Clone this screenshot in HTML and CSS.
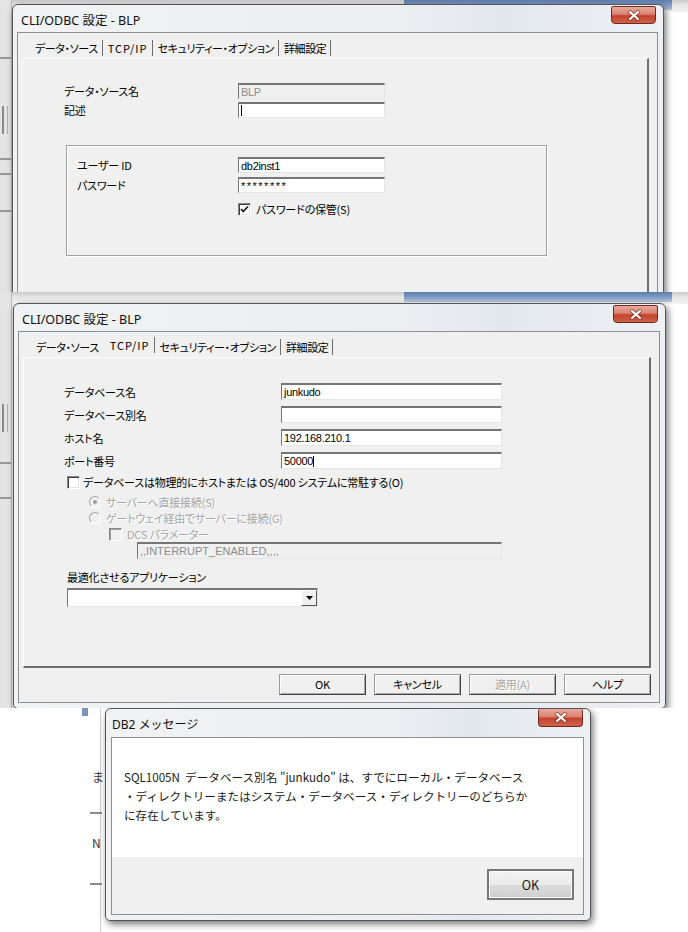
FILE: index.html
```html
<!DOCTYPE html>
<html lang="ja">

<head>
  <meta charset="UTF-8">
  <title>CLI/ODBC 設定 - BLP</title>
  <link rel="stylesheet" href="styles.css">
</head>

<body>
<!-- 1枚目: データ・ソース タブ -->
<div class="shot shot-1">
  <div class="desk desk-top"></div>
  <div class="desk desk-blue"></div>
  <div class="desk desk-left">
    <i class="rule" style="top:57px"></i>
    <i class="mark" style="top:106px"></i>
    <i class="rule" style="top:158px"></i>
    <i class="rule" style="top:173px"></i>
    <i class="rule" style="top:210px"></i>
  </div>

  <div class="win win-1">
    <div class="titlebar">
      <span class="title">CLI/ODBC 設定 - BLP</span>
      <span class="close"><svg width="14" height="11" viewBox="0 0 14 11"><path d="M3 2L11 9M11 2L3 9" stroke="#5a1c14" stroke-width="4" stroke-linecap="round" opacity=".5"/><path d="M3 2L11 9M11 2L3 9" stroke="#fff" stroke-width="2.2" stroke-linecap="round"/></svg></span>
    </div>
    <div class="client">
      <div class="tabs">
        <span class="tab">データ・ソース</span>
        <span class="tab tab-latin">TCP/IP</span>
        <span class="tab">セキュリティー・オプション</span>
        <span class="tab">詳細設定</span>
      </div>
      <div class="panel panel-ds">
        <div class="grid grid-ds">
          <span class="label">データ・ソース名</span>
          <span class="field disabled">BLP</span>
          <span class="label">記述</span>
          <span class="field"><i class="caret"></i></span>
        </div>
        <div class="group">
          <div class="grid grid-user">
            <span class="label">ユーザー ID</span>
            <span class="field">db2inst1</span>
            <span class="label">パスワード</span>
            <span class="field pw">********</span>
          </div>
          <div class="opt opt-save">
            <span class="chk"><svg width="9" height="9" viewBox="0 0 9 9"><path d="M1 4L3.3 6.5L8 1.5" fill="none" stroke="#1a1a1a" stroke-width="1.8"/></svg></span>
            <span>パスワードの保管(S)</span>
          </div>
        </div>
      </div>
    </div>
  </div>
</div>

<!-- 2枚目: TCP/IP タブ -->
<div class="shot shot-2">
  <div class="desk desk-top"></div>
  <div class="desk desk-blue"></div>
  <div class="desk desk-left">
    <i class="mark" style="top:112px"></i>
    <i class="rule" style="top:170px"></i>
    <i class="rule" style="top:205px"></i>
  </div>

  <div class="win win-2">
    <div class="titlebar">
      <span class="title">CLI/ODBC 設定 - BLP</span>
      <span class="close"><svg width="14" height="11" viewBox="0 0 14 11"><path d="M3 2L11 9M11 2L3 9" stroke="#5a1c14" stroke-width="4" stroke-linecap="round" opacity=".5"/><path d="M3 2L11 9M11 2L3 9" stroke="#fff" stroke-width="2.2" stroke-linecap="round"/></svg></span>
    </div>
    <div class="client">
      <div class="tabs">
        <span class="tab tab-prev">データ・ソース</span>
        <span class="tab tab-latin raised">TCP/IP</span>
        <span class="tab">セキュリティー・オプション</span>
        <span class="tab">詳細設定</span>
      </div>
      <div class="panel panel-tcp">
        <div class="grid grid-tcp">
          <span class="label">データベース名</span>
          <span class="field">junkudo</span>
          <span class="label">データベース別名</span>
          <span class="field"></span>
          <span class="label">ホスト名</span>
          <span class="field">192.168.210.1</span>
          <span class="label">ポート番号</span>
          <span class="field">50000<i class="caret"></i></span>
        </div>
        <div class="opt opt-host">
          <span class="chk"></span>
          <span>データベースは物理的にホストまたは OS/400 システムに常駐する(O)</span>
        </div>
        <div class="opt opt-radio off">
          <span class="radio on"></span>
          <span>サーバーへ直接接続(S)</span>
        </div>
        <div class="opt opt-radio off">
          <span class="radio"></span>
          <span>ゲートウェイ経由でサーバーに接続(G)</span>
        </div>
        <div class="opt opt-dcs off">
          <span class="chk dim"></span>
          <span>DCS パラメーター</span>
        </div>
        <span class="field disabled field-dcs">,,INTERRUPT_ENABLED,,,,</span>
        <div class="label label-app">最適化させるアプリケーション</div>
        <div class="combo">
          <span class="combo-btn"><svg width="7" height="4" viewBox="0 0 7 4"><path d="M0 0H7L3.5 4Z" fill="#000"/></svg></span>
        </div>
      </div>
      <div class="buttons">
        <span class="btn">OK</span>
        <span class="btn">キャンセル</span>
        <span class="btn off">適用(A)</span>
        <span class="btn">ヘルプ</span>
      </div>
    </div>
  </div>
</div>

<!-- 3枚目: DB2 メッセージ -->
<div class="shot shot-3">
  <div class="desk desk-bar"></div>
  <div class="desk desk-mark"></div>
  <div class="desk desk-side">
    <span class="frag" style="top:62px">ま</span>
    <i class="rule" style="top:104px"></i>
    <span class="frag" style="top:128px">N</span>
    <i class="rule" style="top:175px"></i>
  </div>

  <div class="win win-3">
    <div class="titlebar">
      <span class="title">DB2 メッセージ</span>
      <span class="close"><svg width="14" height="11" viewBox="0 0 14 11"><path d="M3 2L11 9M11 2L3 9" stroke="#5a1c14" stroke-width="4" stroke-linecap="round" opacity=".5"/><path d="M3 2L11 9M11 2L3 9" stroke="#fff" stroke-width="2.2" stroke-linecap="round"/></svg></span>
    </div>
    <div class="client client-msg">
      <p class="msg">SQL1005N&nbsp; データベース別名 "junkudo" は、すでにローカル・データベース<br>・ディレクトリーまたはシステム・データベース・ディレクトリーのどちらか<br>に存在しています。</p>
      <div class="msg-foot">
        <span class="btn-ok">OK</span>
      </div>
    </div>
  </div>
</div>
</body>

</html>
```

FILE: styles.css
```css
* {
  box-sizing: border-box;
}

body {
  margin: 0;
  width: 688px;
  height: 932px;
  overflow: hidden;
  background: #fff;
  font-family: "Noto Sans CJK JP", sans-serif;
  font-size: 12px;
  color: #000;
}

/* 切り抜いた画面1枚ずつ */
.shot {
  position: relative;
  overflow: hidden;
}

.shot-1 {
  height: 292px;
  background: linear-gradient(90deg, #eaeaea, #f7f7f7 40%, #fff);
}

.shot-2 {
  height: 416px;
  background: linear-gradient(90deg, #eaeaea, #f7f7f7 40%, #fff);
}

.shot-3 {
  height: 224px;
  background: #fff;
}

/* 背景のデスクトップの破片 */
.desk {
  position: absolute;
}

.desk-top {
  left: 0;
  top: 0;
  width: 100%;
  height: 12px;
  background: linear-gradient(#c9c9c9, #e6e6e6 5px, #f2f2f2);
}

.desk-blue {
  left: 404px;
  top: 0;
  width: 268px;
  height: 10px;
  background: linear-gradient(#5d7eaf, #7f9ac2 5px, #b9c8dc);
}

.desk-left {
  left: 0;
  top: 0;
  width: 12px;
  height: 100%;
  background: #e4e4e4;
  border-right: 1px solid #b8b8b8;
}

.rule {
  position: absolute;
  left: 0;
  width: 100%;
  height: 2px;
  background: #9a9a9a;
}

.mark {
  position: absolute;
  left: 2px;
  width: 6px;
  height: 28px;
  border-left: 2px solid #8a8a8a;
  border-right: 1px solid #b0b0b0;
}

.desk-bar {
  left: 155px;
  top: 0;
  width: 220px;
  height: 3px;
  background: #9a9a9a;
}

.desk-mark {
  left: 82px;
  top: 0;
  width: 6px;
  height: 8px;
  background: #7d93b8;
}

.desk-side {
  left: 0;
  top: 0;
  width: 101px;
  height: 100%;
  border-right: 1px solid #cfcfcf;
}

.desk-side .rule {
  left: 90px;
  width: 12px;
  background: #8a8a8a;
}

.frag {
  position: absolute;
  left: 92px;
  font-size: 12px;
  line-height: 14px;
  color: #333;
}

/* ウィンドウ */
.win {
  position: absolute;
  display: flex;
  flex-direction: column;
  border: 1px solid #555;
  border-radius: 6px 6px 5px 5px;
  padding: 0 5px 5px 4px;
  background: linear-gradient(90deg, #f1f2f4, #eceef1 60%, #e3e8ef 75%, #eef0f3);
  box-shadow: 2px 3px 7px rgba(0, 0, 0, .55);
}

.win-1 {
  left: 12px;
  top: 4px;
  width: 652px;
  height: 406px;
}

.win-2 {
  left: 13px;
  top: 11px;
  width: 653px;
  height: 406px;
}

.win-3 {
  left: 105px;
  top: 0;
  width: 486px;
  height: 213px;
  padding: 0 6px 5px 5px;
}

.titlebar {
  flex: none;
  display: flex;
  justify-content: space-between;
  height: 27px;
}

.win-3 .titlebar {
  height: 28px;
}

.title {
  padding: 8px 0 0 4px;
  font-family: "Noto Sans", "Noto Sans CJK JP", sans-serif;
  font-size: 12.5px;
  line-height: 16px;
  color: #111;
}

.win-3 .title {
  padding-left: 1px;
  font-size: 12px;
}

.close {
  display: flex;
  align-items: center;
  justify-content: center;
  width: 45px;
  height: 18px;
  margin: 1px 2px 0 0;
  border: 1px solid #6e2a20;
  border-radius: 2px 2px 4px 4px;
  background: linear-gradient(#e9a99b, #d98372 45%, #c5422d 55%, #d0634b);
}

.win-3 .close {
  margin: 0 1px 0 0;
  border-top: none;
}

.client {
  flex: 1;
  display: flex;
  flex-direction: column;
  border: 1px solid #8d8f93;
  background: #f0f0f0;
  padding: 5px 8px 7px 4px;
  font-size: 11px;
  letter-spacing: -.2px;
  font-feature-settings: "palt";
}

/* タブ */
.tabs {
  flex: none;
  display: flex;
  align-items: center;
  height: 20px;
  padding-left: 8px;
}

.tab {
  height: 16px;
  line-height: 16px;
  padding: 0 4px 0 5px;
  border-right: 1px solid #6d6d6d;
  letter-spacing: -.4px;
}

.tab-latin {
  letter-spacing: 1px;
}

.tab-prev {
  padding-right: 5px;
  border-right-color: transparent;
}

.raised {
  margin-bottom: 5px;
}

.panel {
  flex: none;
  height: 311px;
  border-style: solid;
  border-width: 1px 2px 2px 1px;
  border-color: #fdfdfd #6f6f6f #6f6f6f #fdfdfd;
}

.panel-ds {
  padding: 24px 0 0 41px;
}

.panel-tcp {
  padding: 25px 0 0 40px;
}

/* 入力欄 */
.grid {
  display: grid;
  align-items: center;
}

.grid-ds {
  grid-template-columns: 174px 147px;
  grid-auto-rows: 16px;
  row-gap: 3px;
}

.grid-user {
  grid-template-columns: 161px 147px;
  grid-auto-rows: 16px;
  row-gap: 4px;
}

.grid-tcp {
  grid-template-columns: 217px 221px;
  grid-auto-rows: 17px;
  row-gap: 6px;
}

.label {
  line-height: 16px;
  white-space: nowrap;
}

.field {
  display: flex;
  align-items: center;
  height: 100%;
  padding: 0 2px;
  border-style: solid;
  border-width: 2px 1px 1px 1px;
  border-color: #767676 #e6e6e6 #e6e6e6 #767676;
  background: #fff;
  font-family: "Liberation Sans", sans-serif;
  font-size: 11px;
  letter-spacing: -.3px;
  white-space: nowrap;
}

.field.pw {
  letter-spacing: 1.5px;
}

.field.disabled {
  background: #f0f0f0;
  color: #8c8c8c;
}

.caret {
  width: 1px;
  height: 11px;
  background: #000;
}

.group {
  width: 481px;
  height: 111px;
  margin: 27px 0 0 2px;
  padding: 11px 0 0 10px;
  border: 1px solid #a0a0a0;
  box-shadow: 1px 1px 0 #fff, inset 1px 1px 0 #fff;
}

/* チェックボックスとラジオボタン */
.opt {
  display: flex;
  align-items: center;
  gap: 5px;
  height: 16px;
  white-space: nowrap;
}

.opt.off {
  color: #a6a6a6;
  text-shadow: 1px 1px 0 #fff;
}

.opt-save {
  margin: 8px 0 0 161px;
}

.opt-host {
  margin: 5px 0 0 3px;
  gap: 3px;
}

.opt-radio {
  margin-left: 25px;
}

.opt-radio:nth-child(3) {
  margin-top: 4px;
}

.opt-dcs {
  margin-left: 45px;
}

.chk {
  display: flex;
  align-items: center;
  justify-content: center;
  width: 13px;
  height: 13px;
  border: 1px solid;
  border-color: #858585 #fff #fff #858585;
  box-shadow: inset 1px 1px 0 #404040, inset -1px -1px 0 #e2e2e2;
  background: #fff;
}

.chk.dim {
  background: #f0f0f0;
  box-shadow: inset 1px 1px 0 #a0a0a0;
}

.radio {
  display: flex;
  align-items: center;
  justify-content: center;
  width: 12px;
  height: 12px;
  border: 1px solid;
  border-color: #a2a2a2 #fff #fff #a2a2a2;
  border-radius: 50%;
  background: #f0f0f0;
}

.radio.on::after {
  content: "";
  width: 4px;
  height: 4px;
  border-radius: 50%;
  background: #9d9d9d;
}

.field-dcs {
  width: 365px;
  height: 17px;
  margin-left: 73px;
  letter-spacing: 0;
}

.label-app {
  margin: 10px 0 0 3px;
}

.combo {
  display: flex;
  justify-content: flex-end;
  width: 251px;
  height: 19px;
  margin: 3px 0 0 3px;
  border-style: solid;
  border-width: 2px 1px 1px 1px;
  border-color: #767676 #e6e6e6 #e6e6e6 #767676;
  background: #fff;
}

.combo-btn {
  display: flex;
  align-items: center;
  justify-content: center;
  width: 16px;
  border: 1px solid;
  border-color: #fff #555 #555 #fff;
  background: #f0f0f0;
}

/* ボタン */
.buttons {
  flex: none;
  display: flex;
  justify-content: flex-end;
  gap: 8px;
  margin-top: 6px;
}

.btn {
  width: 87px;
  height: 21px;
  line-height: 19px;
  text-align: center;
  border: 1px solid;
  border-color: #9a9a9a #444 #444 #9a9a9a;
  box-shadow: inset 1px 1px 0 #fff, inset -1px -1px 0 #a8a8a8;
  background: #f0f0f0;
}

.btn.off {
  color: #a6a6a6;
  text-shadow: 1px 1px 0 #fff;
}

/* メッセージ */
.client-msg {
  padding: 0;
  letter-spacing: 0;
  font-feature-settings: normal;
}

.msg {
  height: 119px;
  margin: 0;
  padding: 30px 0 0 12px;
  background: #fff;
  font-size: 11.6px;
  line-height: 19px;
  color: #1a1a1a;
  white-space: nowrap;
}

.msg-foot {
  flex: 1;
  display: flex;
  justify-content: flex-end;
  align-items: flex-start;
  padding: 12px 9px 0 0;
  background: #f0f0f0;
}

.btn-ok {
  width: 87px;
  height: 31px;
  line-height: 27px;
  text-align: center;
  border: 2px solid #777;
  box-shadow: inset 0 0 0 1px #fbfbfb;
  background: linear-gradient(#f2f2f2, #ebebeb 50%, #dddddd 51%, #cfcfcf);
  font-size: 12.5px;
  color: #1a1a1a;
}
```
